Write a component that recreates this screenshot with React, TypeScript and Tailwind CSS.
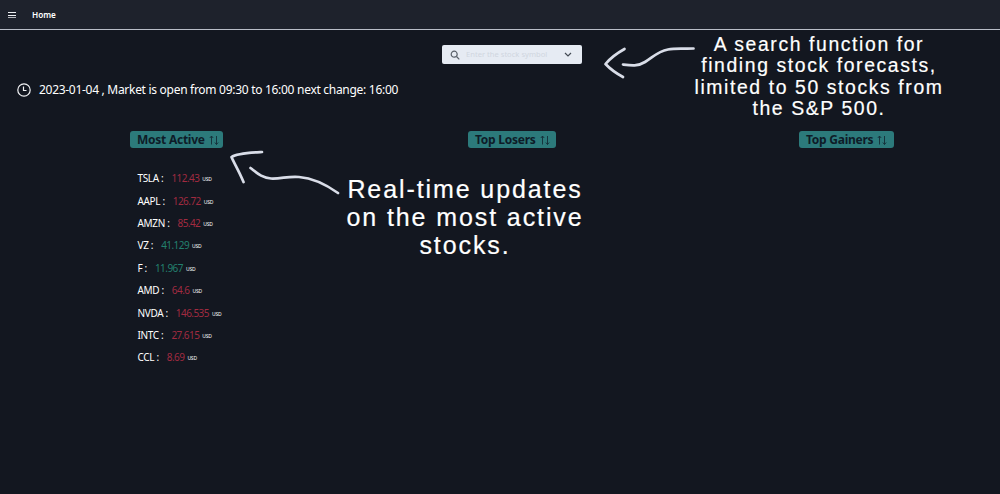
import React from "react";

type Stock = { symbol: string; price: string; up?: boolean };

const stocks: Stock[] = [
  { symbol: "TSLA", price: "112.43" },
  { symbol: "AAPL", price: "126.72" },
  { symbol: "AMZN", price: "85.42" },
  { symbol: "VZ", price: "41.129", up: true },
  { symbol: "F", price: "11.967", up: true },
  { symbol: "AMD", price: "64.6" },
  { symbol: "NVDA", price: "146.535" },
  { symbol: "INTC", price: "27.615" },
  { symbol: "CCL", price: "8.69" },
];

function SortArrows() {
  return (
    <svg viewBox="0 0 12 12" className="h-3 w-3 shrink-0" fill="none" stroke="#142e38" strokeWidth="0.9">
      <path d="M3.500 10.500V2M1.800 4L3.500 2L5.200 4M8.500 2V10.500M6.800 8.500L8.500 10.500L10.200 8.500" />
    </svg>
  );
}

function SectionButton({ label, width }: { label: string; width: string }) {
  return (
    <button className={`flex h-[17px] items-center gap-[3px] rounded-[3px] bg-[#2c7a7b] pl-[7px] text-[12px] leading-none font-bold tracking-[-0.250px] whitespace-nowrap text-[#0e1c28] ${width}`}>
      <span>{label}</span>
      <SortArrows />
    </button>
  );
}

function Arrows() {
  return (
    <svg viewBox="0 0 1000 494" className="pointer-events-none absolute inset-0 h-[494px] w-[1000px]" fill="none" stroke="#d9dde8" strokeWidth="2.7" strokeLinecap="round" strokeLinejoin="round">
      <path d="M624.5 49Q612 56 605.5 64Q612 71 623 77" />
      <path d="M623 64.5C631 65.5 638 66.5 645 62C655 55.5 658 51.5 668 49.5C676 47.8 684 49 693.5 48.5" />
      <path d="M262 152C252 152.5 237 153 231.500 157C234 163 239 171 243.500 182" />
      <path d="M250.500 168C257 173 262 178 271 178.500C281 179 288 176 299 177C312 178 326 184.500 338 193" />
    </svg>
  );
}

export default function App() {
  return (
    <div className="relative h-[494px] w-full overflow-hidden bg-[#131720] font-['Noto_Sans','Open_Sans',sans-serif] text-white">
      <header className="flex h-[30px] items-center border-b border-[#b9bec8] bg-[#1e222c] pl-2">
        <svg viewBox="0 0 8 8" className="h-2 w-2" stroke="#eef0f3" strokeWidth="1">
          <path d="M0 1.500H8M0 4.500H8" />
          <path d="M0 6.500H8" strokeOpacity="0.7" />
        </svg>
        <span className="mt-px ml-4 text-[8.2px] leading-none font-semibold">Home</span>
      </header>

      <div className="mt-[15px] ml-[442px] flex h-[19px] w-[140px] items-center rounded-[2px] bg-[#e6ebf3] pr-[10px] pl-2">
        <svg viewBox="0 0 10 10" className="h-[10px] w-[10px]" fill="none" stroke="#596069" strokeWidth="1.200">
          <circle cx="4.200" cy="4.200" r="3" />
          <path d="M6.500 6.500L9.300 9.300" />
        </svg>
        <span className="ml-[6px] flex-1 text-[7.6px] leading-none whitespace-nowrap text-[#d0d6df]">Enter the stock symbol</span>
        <svg viewBox="0 0 8 6" className="h-[6px] w-2" fill="none" stroke="#444b55" strokeWidth="1.200">
          <path d="M1 1L4 4L7 1" />
        </svg>
      </div>

      <div className="mt-[16px] flex h-5 items-center pl-[17px]">
        <svg viewBox="0 0 14 14" className="h-[14px] w-[14px]" fill="none" stroke="#f2f3f5" strokeWidth="1.200">
          <circle cx="7" cy="7" r="6.200" />
          <path d="M6.500 3.500V7.500H9.500" />
        </svg>
        <p className="ml-[8px] text-[12px] leading-none tracking-[-0.290px] whitespace-nowrap">
          2023-01-04 , Market is open from 09:30 to 16:00 next change: 16:00
        </p>
      </div>

      <main className="mt-[31px] grid grid-cols-[335px_335px_321px] pl-[9px]">
        <section className="pl-[121px]">
          <SectionButton label="Most Active" width="w-[93px]" />
          <ul className="mt-[19px] pl-[7.500px]">
            {stocks.map((s) => (
              <li key={s.symbol} className="flex h-[22.400px] items-center text-[10px] leading-none whitespace-nowrap">
                <span className="tracking-[-0.350px]">{s.symbol} :</span>
                <span className={s.up ? "ml-[8px] tracking-[-0.550px] text-[#23806f]" : "ml-[8px] tracking-[-0.550px] text-[#a12b40]"}>{s.price}</span>
                <span className="mt-[3px] ml-[3px] text-[5px] tracking-[-0.2px]">USD</span>
              </li>
            ))}
          </ul>
        </section>
        <section className="pl-[124px]">
          <SectionButton label="Top Losers" width="w-[88px]" />
        </section>
        <section className="pl-[120px]">
          <SectionButton label="Top Gainers" width="w-[95px]" />
        </section>
      </main>

      <p className="absolute top-[34px] left-[680px] w-[278px] text-center font-['Liberation_Sans',sans-serif] text-[19.400px] leading-[21.400px] tracking-[1.600px] whitespace-nowrap [-webkit-text-stroke:0.2px_white]">
        A search function for<br />finding stock forecasts,<br />limited to 50 stocks from<br />the S&amp;P 500.
      </p>
      <p className="absolute top-[175px] left-[335px] w-[260px] text-center font-['Liberation_Sans',sans-serif] text-[25px] leading-[28px] tracking-[1.900px] whitespace-nowrap [-webkit-text-stroke:0.2px_white]">
        Real-time updates<br />on the most active<br />stocks.
      </p>
      <Arrows />
    </div>
  );
}
